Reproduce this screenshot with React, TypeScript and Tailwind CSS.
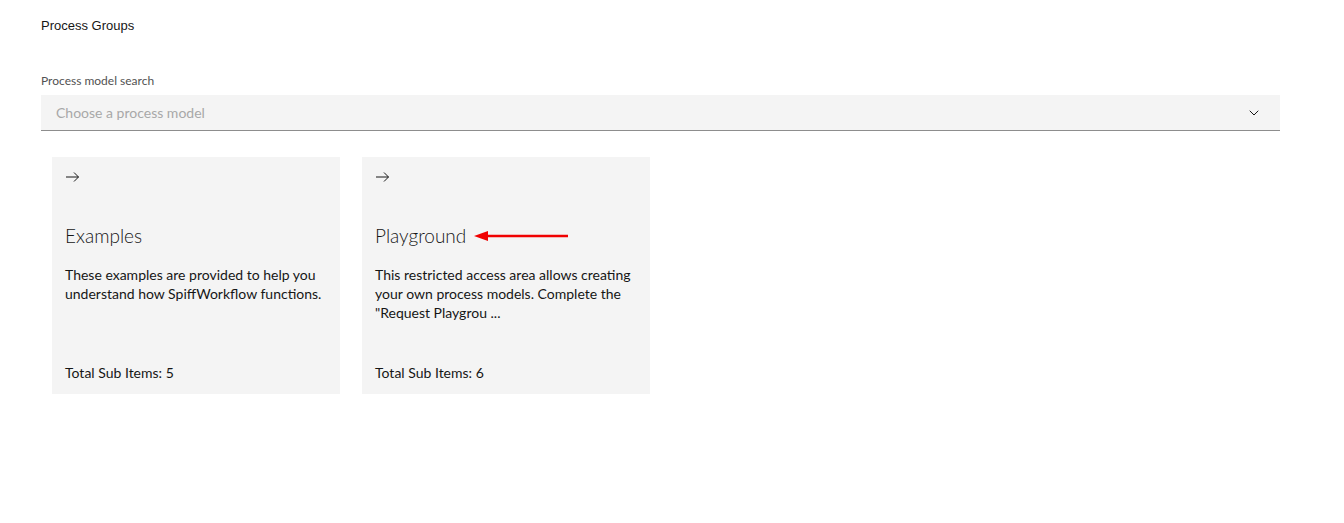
import { ChevronDown } from "lucide-react";

type Group = {
  title: string;
  description: string;
  count: number;
  marked?: boolean;
};

const groups: Group[] = [
  {
    title: "Examples",
    description:
      "These examples are provided to help you understand how SpiffWorkflow functions.",
    count: 5,
  },
  {
    title: "Playground",
    description:
      'This restricted access area allows creating your own process models. Complete the "Request Playgrou ...',
    count: 6,
    marked: true,
  },
];

function Arrow() {
  return (
    <svg width="16" height="16" viewBox="0 0 16 16" fill="none">
      <path d="M1 8h12.5M9 3.5l4.5 4.5-4.5 4.5" stroke="#161616" strokeWidth="1" />
    </svg>
  );
}

function RedArrow() {
  return (
    <svg width="94" height="12" viewBox="0 0 94 12" className="ml-[8px]">
      <path d="M12 6h82" stroke="#f00000" strokeWidth="2.5" />
      <path d="M0 6l14-5v10z" fill="#f00000" />
    </svg>
  );
}

function Card({ group }: { group: Group }) {
  return (
    <div className="w-[288px] h-[237px] bg-[#f4f4f4] px-[13px] pt-[12px] pb-[12px] flex flex-col">
      <Arrow />
      <div className="flex items-center mt-[38px]">
        <h3 className="text-[19px] leading-[26px] font-light text-[#161616]">{group.title}</h3>
        {group.marked && <RedArrow />}
      </div>
      <p className="mt-[16px] text-[14px] leading-[19px] text-[#161616]">
        {group.description}
      </p>
      <div className="mt-auto text-[14px] leading-[18px] text-[#161616]">
        Total Sub Items: {group.count}
      </div>
    </div>
  );
}

export default function App() {
  return (
    <div
      className="w-[1344px] h-[523px] bg-white px-[41px] pt-[18px]"
      style={{ fontFamily: 'Lato, "Noto Sans", sans-serif' }}
    >
      {/* Breadcrumb */}
      <div
        className="text-[13px] leading-[16px] text-[#161616]"
        style={{ fontFamily: '"Liberation Sans", Arial, sans-serif' }}
      >
        Process Groups
      </div>

      {/* Search */}
      <div className="mt-[39px] w-[1239px]">
        <label className="block text-[12px] leading-[16px] text-[#525252] mb-[6px]">
          Process model search
        </label>
        <div className="h-[36px] bg-[#f4f4f4] border-b border-[#8d8d8d] flex items-center pl-[15px] pr-[18px]">
          <span className="flex-1 text-[14px] text-[#a8a8a8]">Choose a process model</span>
          <ChevronDown size={16} strokeWidth={1.5} className="text-[#161616]" />
        </div>
      </div>

      {/* Cards */}
      <div className="flex gap-[22px] ml-[11px] mt-[26px]">
        {groups.map((g) => (
          <Card key={g.title} group={g} />
        ))}
      </div>
    </div>
  );
}
